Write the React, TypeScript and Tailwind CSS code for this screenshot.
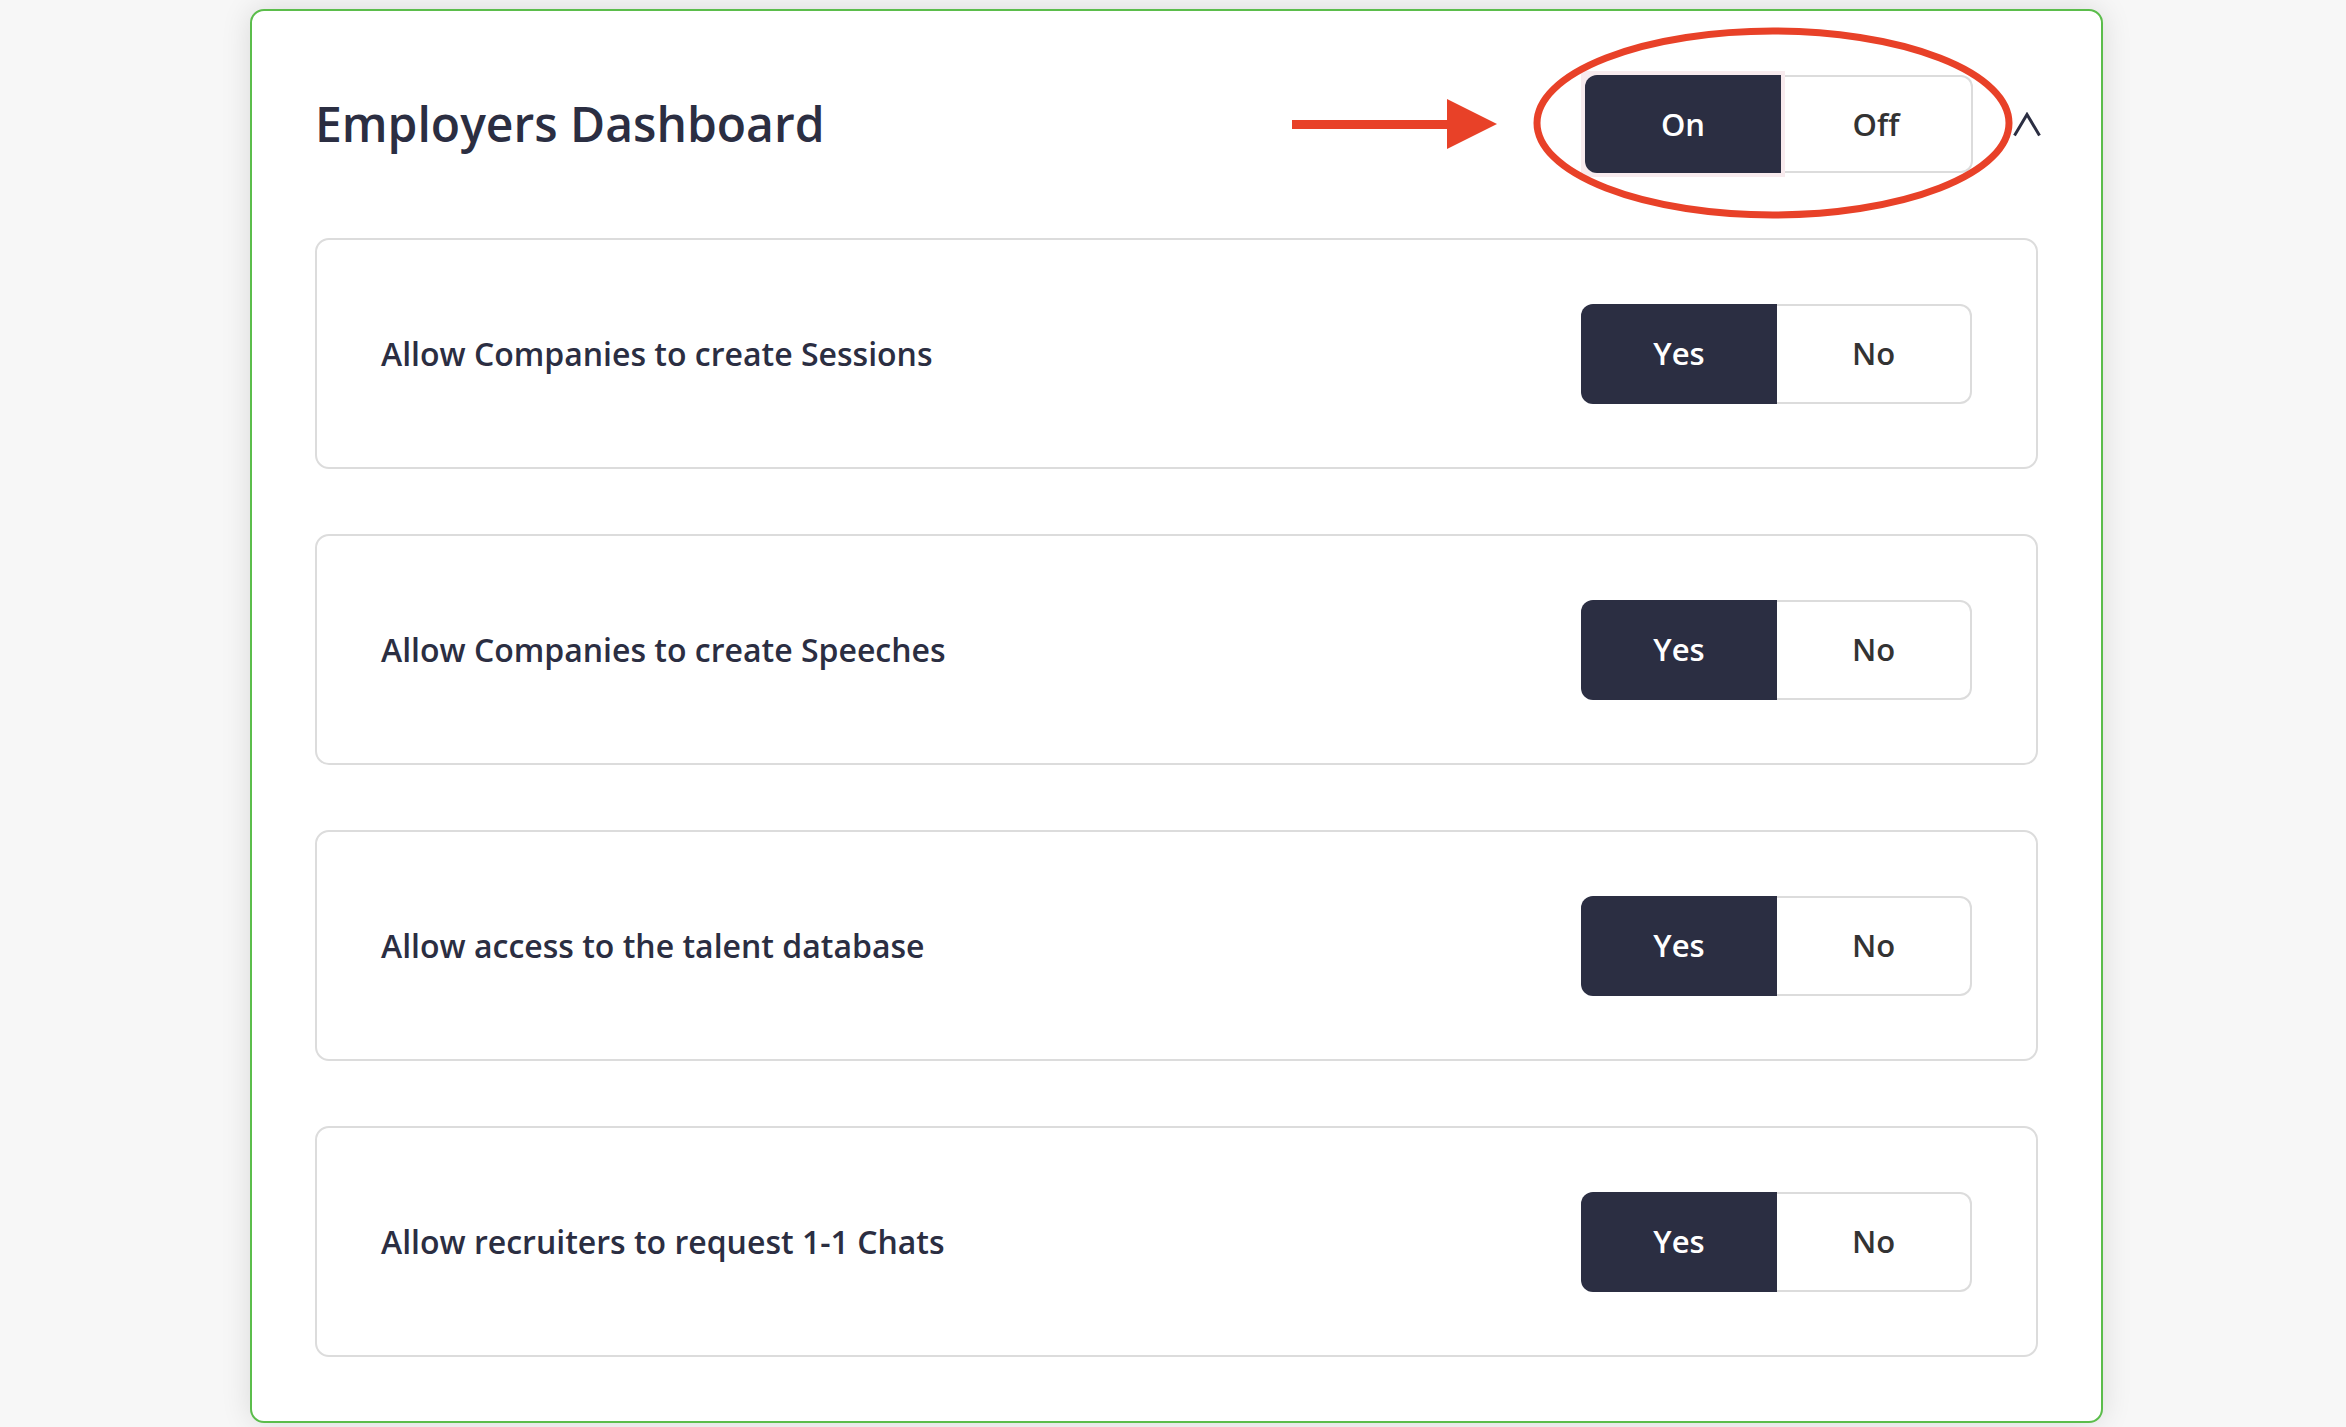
import React from "react";

const SETTINGS = [
  "Allow Companies to create Sessions",
  "Allow Companies to create Speeches",
  "Allow access to the talent database",
  "Allow recruiters to request 1-1 Chats",
];

function Toggle({ left, right }: { left: string; right: string }) {
  return (
    <div className="flex h-[100px] w-[391px]">
      <button className="flex h-full w-[196px] items-center justify-center rounded-l-[12px] bg-[#2b2e42] text-[31px] font-semibold text-white">
        {left}
      </button>
      <button className="flex h-full flex-1 items-center justify-center rounded-r-[12px] border-2 border-l-0 border-[#dcdcdc] bg-white text-[31px] font-semibold text-[#333333]">
        {right}
      </button>
    </div>
  );
}

export default function App() {
  return (
    <div
      className="min-h-screen bg-[#f7f7f7] px-[250px] pt-[9px]"
      style={{ fontFamily: '"Open Sans", "Noto Sans", sans-serif' }}
    >
      <div className="w-[1853px] rounded-[14px] border-2 border-[#5bbd4b] bg-white px-[63px] pb-[64px] pt-[64px] shadow-[0_0_30px_rgba(0,0,0,0.12)]">
        {/* header */}
        <div className="flex h-[98px] items-center justify-between">
          <h1 className="text-[48px] font-semibold text-[#2b2e42]">Employers Dashboard</h1>
          <div className="flex items-center gap-[40px]">
            <div className="relative">
              <svg
                className="absolute left-[-293px] top-[24px]"
                width="205"
                height="50"
                viewBox="0 0 205 50"
              >
                <rect x="0" y="21" width="160" height="9" fill="#e84128" />
                <polygon points="155,0 205,25 155,50" fill="#e84128" />
              </svg>
              <div className="flex h-[98px] w-[388px]">
                <div className="relative h-full w-[196px]">
                  <span className="absolute inset-[-4px] bg-[#f8ebee]" />
                  <button className="relative flex h-full w-full items-center justify-center rounded-l-[12px] bg-[#2b2e42] text-[31px] font-semibold text-white">
                    On
                  </button>
                </div>
                <button className="flex h-full flex-1 items-center justify-center rounded-r-[12px] border-2 border-l-0 border-[#dcdcdc] bg-white text-[31px] font-semibold text-[#333333]">
                  Off
                </button>
              </div>
              <svg
                className="pointer-events-none absolute left-[-52px] top-[-48px]"
                width="480"
                height="192"
                viewBox="0 0 480 192"
              >
                <ellipse cx="240" cy="96" rx="236" ry="92" fill="none" stroke="#e84128" strokeWidth="7" />
              </svg>
            </div>
            <svg width="28" height="25" viewBox="0 0 28 25" className="mr-[-3px]">
              <polyline points="1.5,23.5 14,2.5 26.5,23.5" fill="none" stroke="#2b2e42" strokeWidth="3" />
            </svg>
          </div>
        </div>

        {/* settings */}
        <div className="mt-[65px] flex flex-col gap-[65px]">
          {SETTINGS.map((label) => (
            <div
              key={label}
              className="flex h-[231px] items-center justify-between rounded-[14px] border-2 border-[#dcdcdc] px-[64px]"
            >
              <span className="text-[32px] font-semibold text-[#2b2e42]">{label}</span>
              <Toggle left="Yes" right="No" />
            </div>
          ))}
        </div>
      </div>
    </div>
  );
}
